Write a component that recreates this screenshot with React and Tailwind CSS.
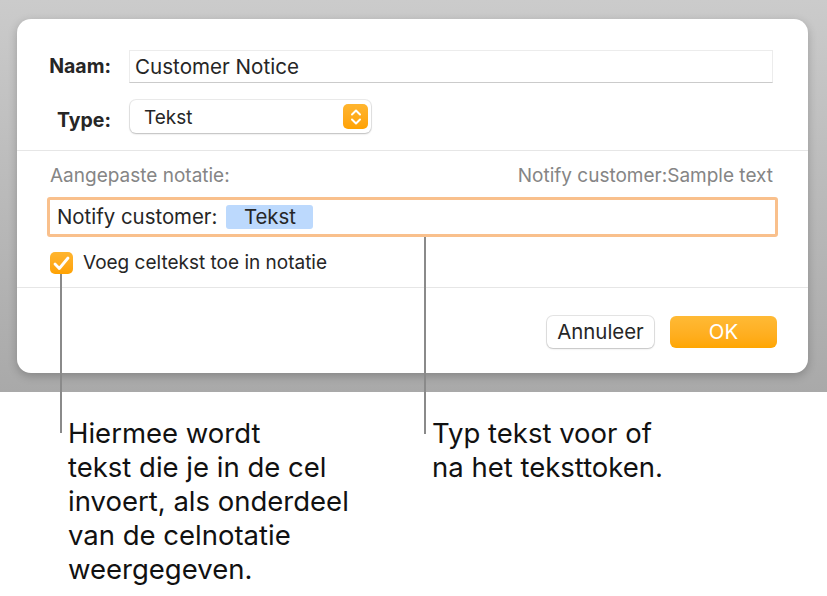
// Custom format dialog with callout annotations
const font = { fontFamily: 'Inter, "Noto Sans", sans-serif' };

function Stepper() {
  return (
    <div className="flex h-[25px] w-[25px] items-center justify-center rounded-[5px] bg-gradient-to-b from-[#ffb52e] to-[#ffa200]">
      <svg width="12" height="18" viewBox="0 0 12 18" fill="none" stroke="white" strokeWidth="2" strokeLinecap="round" strokeLinejoin="round">
        <path d="M2 6.5 L6 2.5 L10 6.5" />
        <path d="M2 11.5 L6 15.5 L10 11.5" />
      </svg>
    </div>
  );
}

function Checkbox() {
  return (
    <div className="flex h-[22px] w-[23px] items-center justify-center rounded-[5px] bg-gradient-to-b from-[#ffb52e] to-[#ffa200]">
      <svg width="17" height="15" viewBox="0 0 17 15" fill="none" stroke="white" strokeWidth="2.8" strokeLinecap="round" strokeLinejoin="round">
        <path d="M2 8 L6.3 12.5 L15 2" />
      </svg>
    </div>
  );
}

export default function App() {
  return (
    <div className="relative h-[596px] w-[827px] overflow-hidden bg-white text-[#262626]" style={font}>
      {/* backdrop with dialog */}
      <div className="h-[392px] bg-gradient-to-b from-[#cbcbcb] to-[#a9a9a9] pl-[17px] pt-[19px]">
        <div className="h-[354px] w-[791px] rounded-[14px] bg-white shadow-[0_3px_10px_rgba(0,0,0,0.22)]">
          {/* name + type */}
          <div className="flex flex-col gap-[17px] border-b border-[#e6e6e6] pb-[17px] pt-[31px]">
            <div className="flex items-center">
              <div className="w-[95px] pr-[1px] pt-[1px] text-right text-[19.5px] font-bold">Naam:</div>
              <div className="ml-[17px] flex h-[33px] w-[644px] items-center border border-[#ececec] border-b-[#cbcbcb] pl-[5px] pt-[1px] text-[20.6px]">
                Customer Notice
              </div>
            </div>
            <div className="flex h-[33px] items-center">
              <div className="w-[95px] translate-y-[4px] pr-[1px] text-right text-[19.5px] font-bold">Type:</div>
              <div className="ml-[18px] flex h-[33px] w-[241px] items-center justify-between rounded-[6px] bg-white pl-[14px] pr-[3px] text-[19px] shadow-[0_0_0_1px_rgba(0,0,0,0.08),0_1px_2px_rgba(0,0,0,0.2)]">
                <span className="translate-y-[2px]">Tekst</span>
                <Stepper />
              </div>
            </div>
          </div>

          {/* custom format */}
          <div className="border-b border-[#e6e6e6] px-[30px] pb-[13px] pt-[13px]">
            <div className="flex h-[24px] items-center justify-between px-[3px] pr-[5px] text-[19px] text-[#858585]">
              <span>Aangepaste notatie:</span>
              <span>Notify customer:Sample text</span>
            </div>
            <div className="mt-[9px] flex h-[40px] items-center rounded-[3px] border-[3px] border-[#f9c08c] pl-[7px] text-[20.4px]">
              <span className="pt-[1px]">Notify customer:</span>
              <span className="ml-[9px] flex h-[24px] w-[87px] items-center justify-center rounded-[3px] bg-[#bcd9fd] pt-[1px]">Tekst</span>
            </div>
            <div className="mt-[15px] flex h-[22px] items-center gap-[10px] pl-[3px] text-[19px] leading-[22px]">
              <Checkbox />
              <span>Voeg celtekst toe in notatie</span>
            </div>
          </div>

          {/* buttons */}
          <div className="flex justify-end gap-[16px] pr-[31px] pt-[28px]">
            <button className="h-[32px] w-[107px] rounded-[6px] bg-white text-[20.4px] text-[#262626] shadow-[0_0_0_1px_rgba(0,0,0,0.1),0_1px_2px_rgba(0,0,0,0.15)]">
              Annuleer
            </button>
            <button className="h-[32px] w-[107px] rounded-[6px] bg-gradient-to-b from-[#ffba35] to-[#ffa600] text-[20.4px] text-white">
              OK
            </button>
          </div>
        </div>
      </div>

      {/* callout texts */}
      <div className="flex pl-[68px] pt-[24px] text-[27.5px] leading-[34px] text-[#111]">
        <div className="w-[364px]">
          Hiermee wordt
          <br />
          tekst die je in de cel
          <br />
          invoert, als onderdeel
          <br />
          van de celnotatie
          <br />
          weergegeven.
        </div>
        <div>
          Typ tekst voor of
          <br />
          na het teksttoken.
        </div>
      </div>

      {/* callout lines */}
      <div className="absolute left-[60px] top-[274px] h-[159px] w-[2px] bg-[#8a8a8a]" />
      <div className="absolute left-[424px] top-[237px] h-[197px] w-[2px] bg-[#8a8a8a]" />
    </div>
  );
}
